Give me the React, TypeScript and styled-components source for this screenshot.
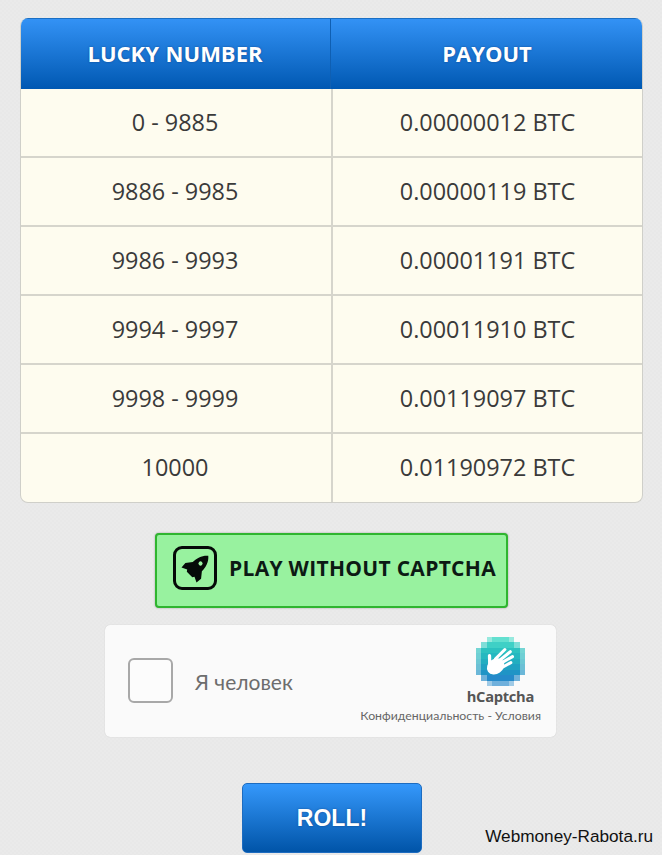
import React from "react";
import styled, { createGlobalStyle } from "styled-components";

const Global = createGlobalStyle`
  html, body { margin: 0; padding: 0; }
  body {
    background: repeating-conic-gradient(#eaeaea 0 25%, #e8e8e8 0 50%) 0 0 / 4px 4px;
    font-family: "Open Sans", "Noto Sans", sans-serif;
  }
`;

const Page = styled.div`
  position: relative;
  width: 662px;
  height: 855px;
  overflow: hidden;
  padding-top: 18px;
  box-sizing: border-box;
  display: flex;
  flex-direction: column;
  align-items: flex-start;
`;

const Table = styled.div`
  margin-left: 20px;
  width: 623px;
  border-radius: 8px;
  overflow: hidden;
  border: 1px solid #cfcfc9;
  border-top: 0;
  box-sizing: border-box;
  background: #fefcef;
`;

const HeaderRow = styled.div`
  display: grid;
  grid-template-columns: 310px 1fr;
  height: 71px;
  margin: 0 -1px;
  background: linear-gradient(#3392f5, #0058b2);
  border-top: 1px solid #1a6fc4;
  box-sizing: border-box;
`;

const HeadCell = styled.div`
  display: flex;
  align-items: center;
  justify-content: center;
  padding-bottom: 2px;
  color: #fff;
  font-weight: 700;
  font-size: 22px;
  word-spacing: 1px;
  text-shadow: 0 0 2px rgba(0, 30, 80, 0.5);
  & + & { border-left: 1px solid #0f5fb2; }
`;

const Row = styled.div`
  display: grid;
  grid-template-columns: 310px 1fr;
  height: 69px;
  box-sizing: border-box;
  border-bottom: 2px solid #d6d5cc;
  &:last-child { height: 68px; border-bottom: 0; }
`;

const Cell = styled.div`
  display: flex;
  align-items: center;
  justify-content: center;
  padding-bottom: 2px;
  color: #3a3a3a;
  font-size: 23.4px;
  &:first-child { padding-right: 2px; }
  & + & { border-left: 2px solid #d6d5cc; }
`;

const PlayButton = styled.div`
  margin: 30px 0 0 155px;
  width: 353px;
  height: 75px;
  box-sizing: border-box;
  display: flex;
  align-items: center;
  gap: 12px;
  padding: 0 0 5px 16px;
  background: #98f29f;
  border: 2px solid #2fb52f;
  border-radius: 4px;
  box-shadow: 0 0 2px rgba(0, 0, 0, 0.35);
  color: #0c1a14;
  font-size: 21px;
  font-weight: 700;
  letter-spacing: 0.3px;
  white-space: nowrap;
`;

const IconFrame = styled.div`
  width: 44px;
  height: 44px;
  box-sizing: border-box;
  border: 3px solid #050a08;
  border-radius: 9px;
  display: flex;
  align-items: center;
  justify-content: center;
`;

const Captcha = styled.div`
  margin: 17px 0 0 105px;
  width: 451px;
  height: 112px;
  box-sizing: border-box;
  background: #fafafa;
  border-radius: 5px;
  box-shadow: 0 0 1px rgba(0, 0, 0, 0.2);
  display: flex;
  align-items: center;
  justify-content: space-between;
  padding: 0 15px 0 23px;
`;

const CaptchaLeft = styled.div`
  display: flex;
  align-items: center;
  gap: 22px;
`;

const Check = styled.div`
  width: 45px;
  height: 45px;
  margin-bottom: 2px;
  box-sizing: border-box;
  background: #fcfcfc;
  border: 2px solid #a8a8a8;
  border-radius: 6px;
`;

const CheckLabel = styled.span`
  font-family: "Lato", "Noto Sans", sans-serif;
  font-size: 21px;
  color: #6d6d6d;
`;

const Brand = styled.div`
  display: flex;
  flex-direction: column;
  align-items: flex-end;
  margin-bottom: 2px;
`;

const BrandName = styled.div`
  font-size: 14.7px;
  font-weight: 700;
  color: #555;
  letter-spacing: -0.3px;
  line-height: 18px;
  margin: 1px 7px 0 0;
`;

const Legal = styled.div`
  font-family: "Lato", "Noto Sans", sans-serif;
  font-size: 12.3px;
  color: #666;
  line-height: 16px;
  margin-top: 3px;
`;

const LogoWrap = styled.div`
  margin-right: 16px;
  display: flex;
`;

const RollButton = styled.div`
  margin: 46px 0 0 242px;
  width: 180px;
  height: 70px;
  box-sizing: border-box;
  display: flex;
  align-items: center;
  justify-content: center;
  background: linear-gradient(#3598fb, #0054a8);
  border-radius: 5px;
  border: 1px solid #1d6cc0;
  color: #fff;
  font-family: "Liberation Sans", Arial, sans-serif;
  font-weight: 700;
  font-size: 23px;
  text-shadow: 0 0 2px rgba(0, 30, 80, 0.5);
`;

const Watermark = styled.div`
  position: absolute;
  right: 9px;
  bottom: 8px;
  font-family: "Liberation Sans", Arial, sans-serif;
  font-size: 17.2px;
  color: #111;
`;

const rows: [string, string][] = [
  ["0 - 9885", "0.00000012 BTC"],
  ["9886 - 9985", "0.00000119 BTC"],
  ["9986 - 9993", "0.00001191 BTC"],
  ["9994 - 9997", "0.00011910 BTC"],
  ["9998 - 9999", "0.00119097 BTC"],
  ["10000", "0.01190972 BTC"],
];

const logoRows = [
  [2, 6],
  [1, 7],
  [0, 8],
  [0, 8],
  [0, 8],
  [0, 8],
  [0, 8],
  [1, 7],
  [2, 6],
];
const rowColors = ["#63e0d0", "#3fd0c6", "#2cc2c0", "#25b8c0", "#22aec0", "#20a2c2", "#1f94c6", "#258aca", "#6fb0dc"];

const Logo = () => (
  <svg width="49" height="49" viewBox="0 0 45 45" shapeRendering="crispEdges">
    {logoRows.map(([a, b], y) => {
      const cells = [];
      for (let x = a; x <= b; x++) {
        const edge = x === a || x === b;
        cells.push(
          <rect key={x} x={x * 5} y={y * 5} width={5} height={5} fill={rowColors[y]} opacity={edge ? 0.65 : 1} />
        );
      }
      return <g key={y}>{cells}</g>;
    })}
    <g shapeRendering="auto" stroke="#fff" strokeLinecap="round" fill="none">
      <path strokeWidth="3" d="M12.6 25 L12.4 17" />
      <path strokeWidth="2.8" d="M18 20 L26.5 11.5 M21 22 L31.5 13.5 M23 24 L33.5 18 M24 28 L32 23.5" />
      <ellipse cx="18" cy="27" rx="8.5" ry="6.8" fill="#fff" stroke="none" transform="rotate(-35 18 27)" />
    </g>
  </svg>
);

const Rocket = () => (
  <svg width="31" height="31" viewBox="-12 -12 24 24">
    <g transform="rotate(45) translate(0 -0.5)">
      <path
        fill="#050a08"
        d="M0 -13.5 C3.6 -10.5 5 -6 5 -1.5 L8.6 3 L8.2 7.6 L4 5.6 L3 7 L-3 7 L-4 5.6 L-8.2 7.6 L-8.6 3 L-5 -1.5 C-5 -6 -3.6 -10.5 0 -13.5 Z"
      />
      <circle cx="0" cy="-5" r="1.6" fill="#98f29f" />
    </g>
  </svg>
);

export default function App() {
  return (
    <Page>
      <Global />
      <Table>
        <HeaderRow>
          <HeadCell>LUCKY NUMBER</HeadCell>
          <HeadCell>PAYOUT</HeadCell>
        </HeaderRow>
        {rows.map(([a, b]) => (
          <Row key={a}>
            <Cell>{a}</Cell>
            <Cell>{b}</Cell>
          </Row>
        ))}
      </Table>
      <PlayButton>
        <IconFrame>
          <Rocket />
        </IconFrame>
        PLAY WITHOUT CAPTCHA
      </PlayButton>
      <Captcha>
        <CaptchaLeft>
          <Check />
          <CheckLabel>Я человек</CheckLabel>
        </CaptchaLeft>
        <Brand>
          <LogoWrap>
            <Logo />
          </LogoWrap>
          <BrandName>hCaptcha</BrandName>
          <Legal>Конфиденциальность - Условия</Legal>
        </Brand>
      </Captcha>
      <RollButton>ROLL!</RollButton>
      <Watermark>Webmoney-Rabota.ru</Watermark>
    </Page>
  );
}
